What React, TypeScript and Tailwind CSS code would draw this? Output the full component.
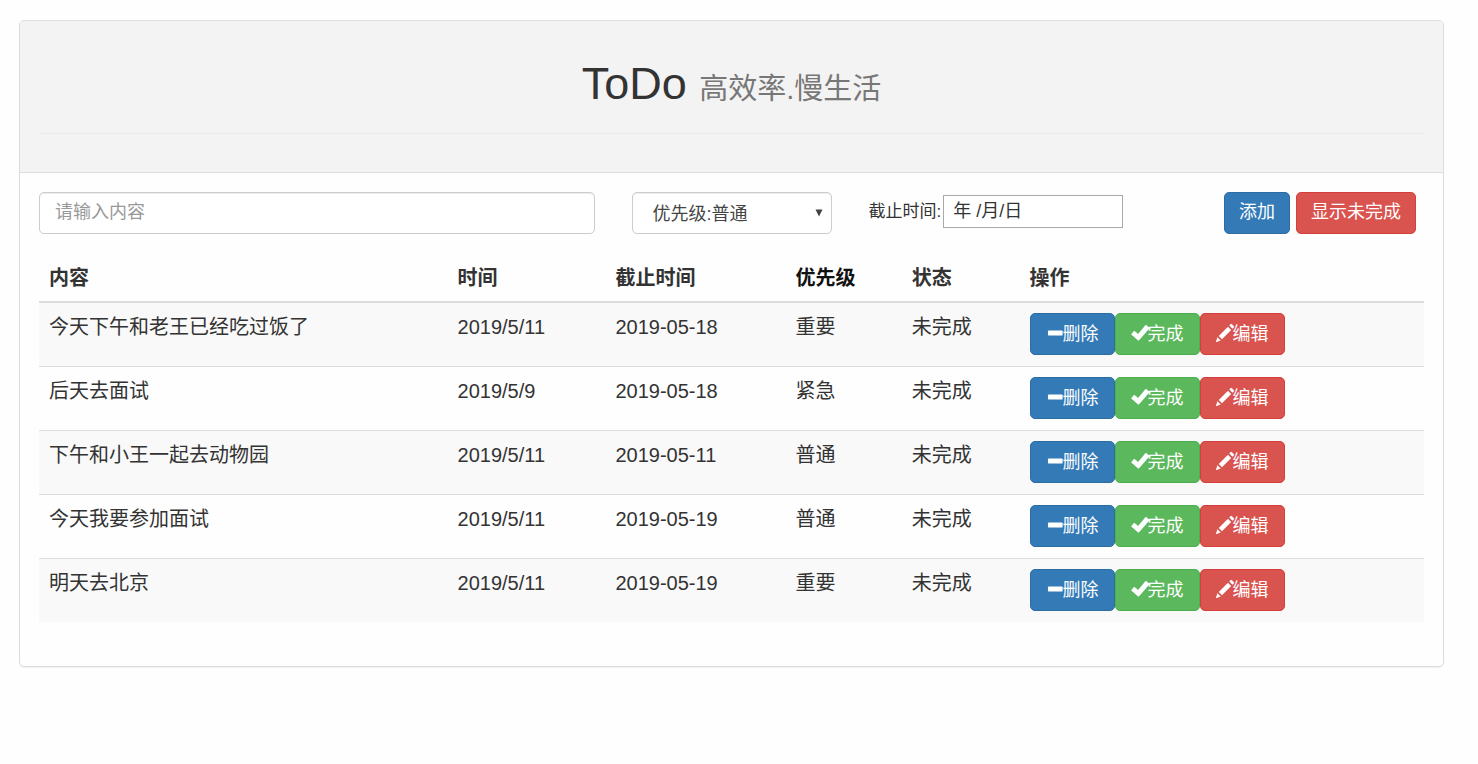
import { useState } from "react";
import type { ReactNode } from "react";

type Todo = {
  content: string;
  created: string;
  deadline: string;
  priority: string;
  status: string;
};

const todos: Todo[] = [
  { content: "今天下午和老王已经吃过饭了", created: "2019/5/11", deadline: "2019-05-18", priority: "重要", status: "未完成" },
  { content: "后天去面试", created: "2019/5/9", deadline: "2019-05-18", priority: "紧急", status: "未完成" },
  { content: "下午和小王一起去动物园", created: "2019/5/11", deadline: "2019-05-11", priority: "普通", status: "未完成" },
  { content: "今天我要参加面试", created: "2019/5/11", deadline: "2019-05-19", priority: "普通", status: "未完成" },
  { content: "明天去北京", created: "2019/5/11", deadline: "2019-05-19", priority: "重要", status: "未完成" },
];

const columns = [
  { label: "内容", className: "w-[29.5%]" },
  { label: "时间", className: "w-[11.4%]" },
  { label: "截止时间", className: "w-[13%]" },
  { label: "优先级", className: "w-[8.4%] text-[#111]" },
  { label: "状态", className: "w-[8.5%]" },
  { label: "操作", className: "" },
];

const tones = {
  blue: "bg-[#337ab7] border-[#2e6da4]",
  green: "bg-[#5cb85c] border-[#4cae4c]",
  red: "bg-[#d9534f] border-[#d43f3a]",
};

const sizes = {
  toolbar: "px-[14px] pb-[2px]",
  row: "px-[15px] pt-[1px]",
};

type ButtonProps = { tone: keyof typeof tones; size: keyof typeof sizes; children: ReactNode };

function Button({ tone, size, children }: ButtonProps) {
  return (
    <button
      type="button"
      className={`inline-flex h-[42px] items-center rounded-[5px] border text-[18px] leading-[25px] whitespace-nowrap text-white ${sizes[size]} ${tones[tone]}`}
    >
      {children}
    </button>
  );
}

function Icon({ path }: { path: string }) {
  return (
    <svg viewBox="0 0 1200 1200" className="-mr-[1px] mb-[3px] size-[18px] shrink-0 overflow-visible" fill="currentColor" aria-hidden="true">
      <path transform="translate(0 1200) scale(1 -1)" d={path} />
    </svg>
  );
}

const minus =
  "M180 770h880q21 0 35.5 -14.5t14.5 -35.5v-240q0 -21 -14.5 -35.5t-35.5 -14.5h-880q-21 0 -35.5 14.5t-14.5 35.5v240q0 21 14.5 35.5t35.5 14.5z";
const check =
  "M970 1130q18 20 42 0l210 -180q22 -20 2 -42l-700 -800q-22 -24 -46 0l-460 390q-22 20 0 42l180 190q20 22 44 2l230 -200z";
const pencil =
  "M1011 1210q19 0 33 -13l153 -153q13 -14 13 -33t-13 -33l-99 -92l-214 214l95 96q14 14 32 14zM1013 800l-615 -614l-214 214l614 614zM317 96l-333 -112l110 335z";

export default function App() {
  const [content, setContent] = useState("");
  const [deadline, setDeadline] = useState("");

  return (
    <div className="min-h-screen bg-[#fefefe] pt-[20px] pr-[34px] pl-[19px] font-['Liberation_Sans','Noto_Sans_CJK_SC',sans-serif] text-[#333]">
      <main className="rounded-[5px] border border-[#ddd] bg-[#fefefe] shadow-[0_1px_1px_rgba(0,0,0,0.05)]">
        <header className="rounded-t-[4px] border-b border-[#ddd] bg-[#f3f3f3] px-[19px] pt-[38px] pb-[38px]">
          <h1 className="border-b border-[#eaeaea] pb-[24px] text-center text-[45px] leading-[50px]">
            ToDo <small className="text-[29px] leading-none text-[#777]">高效率.慢生活</small>
          </h1>
        </header>

        <div className="px-[19px] pt-[19px] pb-[44px]">
          <form className="grid grid-cols-12 gap-x-[37px]" onSubmit={(e) => e.preventDefault()}>
            <input
              type="text"
              aria-label="内容"
              placeholder="请输入内容"
              value={content}
              onChange={(e) => setContent(e.target.value)}
              className="col-span-5 h-[42px] rounded-[5px] border border-[#ccc] bg-white px-[15px] pb-[2px] text-[18px] shadow-[inset_0_1px_1px_rgba(0,0,0,0.075)] placeholder:text-[#999]"
            />
            <div className="relative col-span-2">
              <select
                aria-label="优先级"
                defaultValue="普通"
                className="h-[42px] w-full appearance-none rounded-[5px] border border-[#ccc] bg-white pt-[2px] pr-[24px] pl-[20px] text-[18px] text-[#444] shadow-[inset_0_1px_1px_rgba(0,0,0,0.075)]"
              >
                <option value="普通">优先级:普通</option>
                <option value="重要">优先级:重要</option>
                <option value="紧急">优先级:紧急</option>
              </select>
              <svg viewBox="0 0 8 8" className="pointer-events-none absolute top-[17px] right-[9px] size-[8px]" fill="#444" aria-hidden="true">
                <path d="M0.5 0.5h7L4 7.5z" />
              </svg>
            </div>
            <div className="col-span-3 flex items-start gap-[2px] pt-[3px]">
              <label htmlFor="deadline" className="text-[17px] leading-[33px] whitespace-nowrap">
                截止时间:
              </label>
              <input
                id="deadline"
                type="text"
                placeholder="年 /月/日"
                value={deadline}
                onChange={(e) => setDeadline(e.target.value)}
                className="h-[33px] w-[180px] border border-[#a9a9a9] bg-white px-[9px] text-[18px] placeholder:text-[#333]"
              />
            </div>
            <div className="col-span-2 flex gap-[6px]">
              <Button tone="blue" size="toolbar">添加</Button>
              <Button tone="red" size="toolbar">显示未完成</Button>
            </div>
          </form>

          <table className="mt-[19px] w-full table-fixed border-collapse text-left text-[20px] leading-[28px]">
            <thead>
              <tr className="border-b-2 border-[#ddd]">
                {columns.map((c) => (
                  <th key={c.label} scope="col" className={`px-[10px] pt-[11px] pb-[9px] font-bold ${c.className}`}>
                    {c.label}
                  </th>
                ))}
              </tr>
            </thead>
            <tbody>
              {todos.map((t) => (
                <tr key={t.content} className="h-[64px] border-t border-[#ddd] align-top odd:bg-[#f9f9f9] first:border-t-0">
                  <td className="px-[10px] py-[10px]">{t.content}</td>
                  <td className="px-[10px] py-[10px]">{t.created}</td>
                  <td className="px-[10px] py-[10px]">{t.deadline}</td>
                  <td className="px-[10px] py-[10px]">{t.priority}</td>
                  <td className="px-[10px] py-[10px]">{t.status}</td>
                  <td className="px-[10px] py-[10px]">
                    <div className="flex">
                      <Button tone="blue" size="row">
                        <Icon path={minus} />
                        删除
                      </Button>
                      <Button tone="green" size="row">
                        <Icon path={check} />
                        完成
                      </Button>
                      <Button tone="red" size="row">
                        <Icon path={pencil} />
                        编辑
                      </Button>
                    </div>
                  </td>
                </tr>
              ))}
            </tbody>
          </table>
        </div>
      </main>
    </div>
  );
}
